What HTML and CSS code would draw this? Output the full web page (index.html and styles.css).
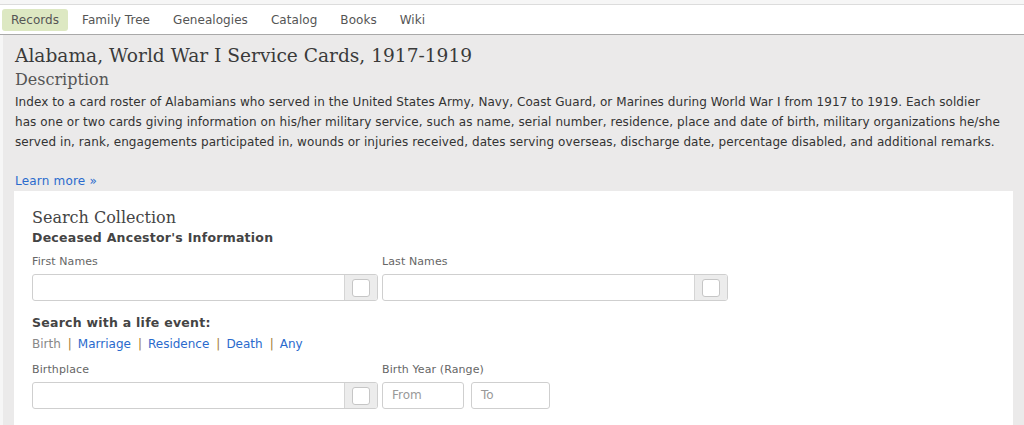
FILE: index.html
```html
<!DOCTYPE html>
<html>
<head>
<meta charset="utf-8">
<link rel="stylesheet" href="styles.css">
</head>
<body>
<div class="topbar">
  <nav class="nav">
    <a class="nav-item active">Records</a>
    <a class="nav-item">Family Tree</a>
    <a class="nav-item">Genealogies</a>
    <a class="nav-item">Catalog</a>
    <a class="nav-item">Books</a>
    <a class="nav-item">Wiki</a>
  </nav>
</div>
<main class="main">
  <h1 class="title">Alabama, World War I Service Cards, 1917-1919</h1>
  <h2 class="subtitle">Description</h2>
  <p class="desc">Index to a card roster of Alabamians who served in the United States Army, Navy, Coast Guard, or Marines during World War I from 1917 to 1919. Each soldier<br>has one or two cards giving information on his/her military service, such as name, serial number, residence, place and date of birth, military organizations he/she<br>served in, rank, engagements participated in, wounds or injuries received, dates serving overseas, discharge date, percentage disabled, and additional remarks.</p>
  <a class="learn">Learn more »</a>
  <section class="card">
    <h3 class="card-title">Search Collection</h3>
    <div class="section-label">Deceased Ancestor's Information</div>
    <div class="row">
      <div class="field">
        <label class="label">First Names</label>
        <div class="input">
          <span class="input-text"></span>
          <span class="exact"><span class="box"></span></span>
        </div>
      </div>
      <div class="field">
        <label class="label">Last Names</label>
        <div class="input">
          <span class="input-text"></span>
          <span class="exact"><span class="box"></span></span>
        </div>
      </div>
    </div>
    <div class="section-label life">Search with a life event:</div>
    <div class="events">
      <span class="ev current">Birth</span><span class="sep">|</span><a class="ev">Marriage</a><span class="sep">|</span><a class="ev">Residence</a><span class="sep">|</span><a class="ev">Death</a><span class="sep">|</span><a class="ev">Any</a>
    </div>
    <div class="row row-event">
      <div class="field">
        <label class="label">Birthplace</label>
        <div class="input">
          <span class="input-text"></span>
          <span class="exact"><span class="box"></span></span>
        </div>
      </div>
      <div class="field">
        <label class="label">Birth Year (Range)</label>
        <div class="range">
          <div class="small-input from">From</div>
          <div class="small-input to">To</div>
        </div>
      </div>
    </div>
  </section>
</main>
</body>
</html>
```
FILE: styles.css
```css
* { box-sizing: border-box; }
html, body { margin: 0; padding: 0; }
body {
  background: #f6f6f6;
  font-family: "DejaVu Sans", Verdana, sans-serif;
  color: #333;
  height: 425px;
  overflow: hidden;
}
.topbar {
  margin-top: 4px;
  border-top: 1px solid #dcdcdc;
  background: #fff;
  border-bottom: 1px solid #a9a9a9;
  height: 31px;
}
.nav {
  display: flex;
  align-items: center;
  height: 30px;
  padding-left: 2px;
}
.nav-item {
  font-size: 12px;
  letter-spacing: 0.05px;
  color: #555;
  padding: 0 9px;
  height: 22px;
  line-height: 22px;
  margin-right: 5px;
  border-radius: 3px;
}
.nav-item.active {
  background: #dde8c2;
}
.main {
  margin-left: 3px;
  background: #ebeaea;
  padding: 9px 11px 0 11px;
  height: 400px;
}
.title {
  margin: 0 0 0 1px;
  font-family: "DejaVu Serif", Georgia, serif;
  font-weight: normal;
  font-size: 18.6px;
  line-height: 24px;
  color: #3a3a3a;
}
.subtitle {
  margin: 0 0 0 1px;
  font-family: "DejaVu Serif", Georgia, serif;
  font-weight: normal;
  font-size: 16px;
  line-height: 24px;
  color: #555;
}
.desc {
  margin: 0 0 20px 1px;
  font-size: 12px;
  letter-spacing: 0.07px;
  line-height: 20px;
  color: #333;
  white-space: nowrap;
}
.learn {
  display: block;
  margin-left: 1px;
  font-size: 12px;
  letter-spacing: 0.2px;
  line-height: 19px;
  color: #2a6acd;
}
.card {
  background: #fff;
  padding: 17px 18px 20px 18px;
  height: 300px;
}
.card-title {
  margin: 0;
  font-family: "DejaVu Serif", Georgia, serif;
  font-weight: normal;
  font-size: 16px;
  line-height: 20px;
  color: #444;
}
.section-label {
  font-size: 12.5px;
  letter-spacing: 0.25px;
  font-weight: bold;
  color: #444;
  line-height: 20px;
}
.section-label.life { margin-top: 12px; }
.row {
  display: flex;
  gap: 4px;
  margin-top: 7px;
}
.row.row-event { margin-top: 9px; }
.field {
  width: 346px;
  display: flex;
  flex-direction: column;
}
.label {
  font-size: 11px;
  letter-spacing: 0.1px;
  color: #666;
  line-height: 14px;
  margin-bottom: 5px;
}
.input {
  display: flex;
  height: 27px;
  border: 1px solid #cfcfcf;
  border-radius: 3px;
  background: #fff;
  overflow: hidden;
}
.input-text { flex: 1; }
.exact {
  width: 33px;
  background: #ececec;
  border-left: 1px solid #d5d5d5;
  display: flex;
  align-items: center;
  justify-content: center;
}
.box {
  width: 18px;
  height: 18px;
  background: #fff;
  border: 1px solid #c6c6c6;
  border-radius: 3px;
}
.events {
  margin-top: 1px;
  font-size: 12px;
  line-height: 20px;
}
.ev { color: #2a6acd; }
.ev.current { color: #888; }
.sep { color: #a07a35; margin: 0 6px 0 7px; }
.range {
  display: flex;
  gap: 7px;
}
.small-input {
  height: 27px;
  border: 1px solid #cfcfcf;
  border-radius: 3px;
  font-size: 12px;
  color: #999;
  line-height: 25px;
  padding-left: 9px;
}
.small-input.from { width: 82px; }
.small-input.to { width: 79px; }
```
